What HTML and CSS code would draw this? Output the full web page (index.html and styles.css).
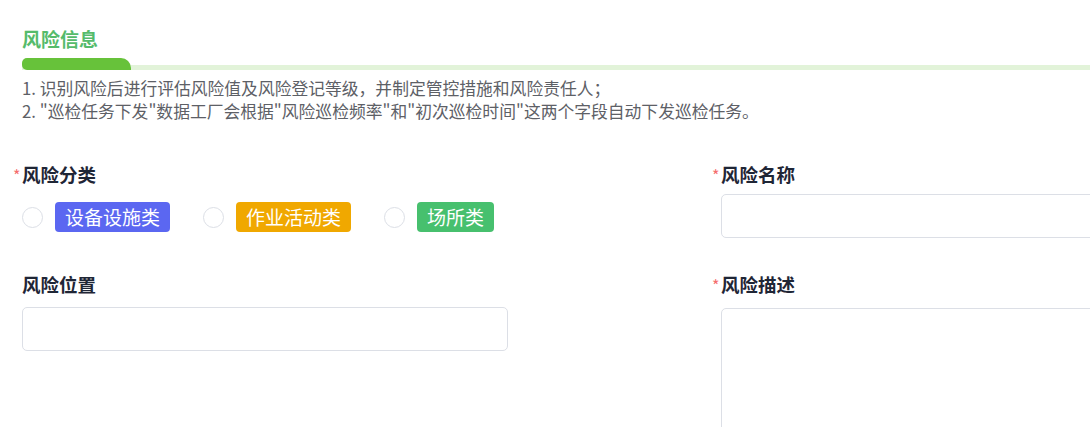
FILE: index.html
```html
<!DOCTYPE html>
<html lang="zh-CN">
<head>
<meta charset="UTF-8">
<title>风险信息</title>
<link rel="stylesheet" href="styles.css">
</head>
<body>
<div class="page">
  <div class="section-title">风险信息</div>
  <div class="title-bar"><div class="title-bar-active"></div></div>
  <div class="notes">
    <p>1. 识别风险后进行评估风险值及风险登记等级，并制定管控措施和风险责任人；</p>
    <p>2. "巡检任务下发"数据工厂会根据"风险巡检频率"和"初次巡检时间"这两个字段自动下发巡检任务。</p>
  </div>
  <div class="form-grid">
    <div class="form-item">
      <div class="label"><span class="req">*</span>风险分类</div>
      <div class="radio-group">
        <label class="radio"><span class="radio-dot"></span><span class="tag tag-blue">设备设施类</span></label>
        <label class="radio"><span class="radio-dot"></span><span class="tag tag-orange">作业活动类</span></label>
        <label class="radio"><span class="radio-dot"></span><span class="tag tag-green">场所类</span></label>
      </div>
    </div>
    <div class="form-item">
      <div class="label"><span class="req">*</span>风险名称</div>
      <div class="input"></div>
    </div>
    <div class="form-item row2">
      <div class="label">风险位置</div>
      <div class="input"></div>
    </div>
    <div class="form-item row2">
      <div class="label"><span class="req">*</span>风险描述</div>
      <div class="textarea"></div>
    </div>
  </div>
</div>
</body>
</html>
```
FILE: styles.css
```css
html, body {
  margin: 0;
  padding: 0;
  background: #ffffff;
  overflow: hidden;
}
body {
  width: 1090px;
  height: 427px;
  font-family: "Noto Sans CJK SC", "Noto Sans", sans-serif;
}
.page {
  padding-top: 26px;
}
.section-title {
  padding-left: 22px;
  font-size: 19px;
  line-height: 26px;
  font-weight: 700;
  color: #55bb6b;
}
.title-bar {
  margin-top: 6px;
  margin-left: 22px;
  height: 12px;
  display: flex;
  align-items: flex-end;
  background: linear-gradient(to bottom, transparent 7px, #e2f3d9 7px);
}
.title-bar-active {
  width: 109px;
  height: 12px;
  background: #67c23a;
  border-radius: 5px 10px 0 5px;
}
.notes {
  margin-top: 7px;
  padding-left: 22px;
  font-size: 16.8px;
  line-height: 23px;
  color: #5d6066;
}
.notes p {
  margin: 0;
  white-space: nowrap;
}
.form-grid {
  margin-top: 38px;
  padding-left: 22px;
  display: grid;
  grid-template-columns: 486px 486px;
  column-gap: 213px;
  row-gap: 33px;
}
.label {
  font-size: 18.5px;
  line-height: 26px;
  font-weight: 700;
  color: #1f2636;
  margin-bottom: 6px;
  white-space: nowrap;
}
.row2 .label {
  margin-bottom: 10px;
}
.req {
  color: #f56c6c;
  font-weight: 400;
  font-size: 16px;
  margin-left: -9px;
  display: inline-block;
  width: 9px;
}
.radio-group {
  display: flex;
  align-items: center;
  padding-top: 8px;
}
.radio {
  display: flex;
  align-items: center;
  flex-shrink: 0;
  gap: 12px;
  margin-right: 33px;
}
.radio-dot {
  flex-shrink: 0;
  width: 19px;
  height: 19px;
  border: 1px solid #dcdfe6;
  border-radius: 50%;
  background: #fff;
}
.tag {
  flex-shrink: 0;
  white-space: nowrap;
  height: 30px;
  line-height: 30px;
  padding: 0 10px;
  border-radius: 4px;
  color: #ffffff;
  font-size: 19px;
}
.tag-blue { background: #5b67f1; }
.tag-orange { background: #f0a800; }
.tag-green { background: #47c06e; }
.input {
  height: 42px;
  border: 1px solid #dcdfe6;
  border-radius: 5px;
  background: #fff;
}
.textarea {
  height: 140px;
  border: 1px solid #dcdfe6;
  border-radius: 5px;
  background: #fff;
}
```
